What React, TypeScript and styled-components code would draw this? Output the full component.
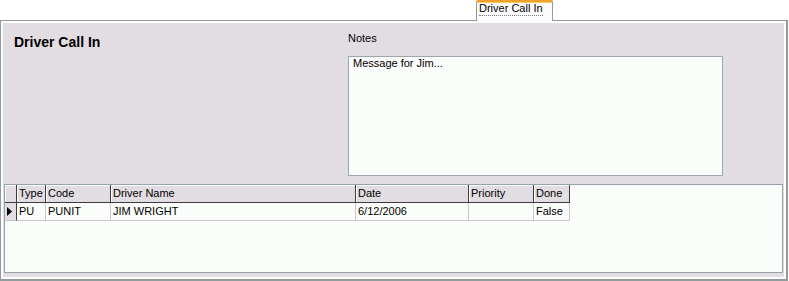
import React from 'react';
import styled, { createGlobalStyle } from 'styled-components';

const GlobalStyle = createGlobalStyle`
    html, body {
        margin: 0;
        padding: 0;
        background: #ffffff;
    }
    body {
        font-family: "Liberation Sans", Arial, sans-serif;
        font-size: 11px;
        color: #000000;
    }
`

const Page = styled.div`
    display: flex;
    flex-direction: column;
    width: 789px;
    height: 281px;
    box-sizing: border-box;
`
const TabStrip = styled.div`
    display: flex;
    flex-direction: row;
    height: 20px;
    padding-left: 476px;
`
const Tab = styled.div`
    position: relative;
    z-index: 1;
    box-sizing: border-box;
    width: 77px;
    height: 21px;
    margin-bottom: -1px;
    padding-left: 2px;
    background: #fcfcfe;
    border-left: 1px solid #919b9c;
    border-right: 1px solid #919b9c;
    border-top: 2px solid #f0a02c;
    border-radius: 2px 2px 0 0;
    box-shadow: inset 0 1px 0 #ffc85a;
`
const TabLabel = styled.span`
    display: inline-block;
    line-height: 13px;
    border-bottom: 1px dotted #7a7a7a;
`
const Panel = styled.div`
    box-sizing: border-box;
    width: 788px;
    height: 261px;
    border-left: 1px solid #919b9c;
    border-top: 1px solid #919b9c;
    border-right: 2px solid #919b9c;
    border-bottom: 2px solid #919b9c;
`
const PanelBody = styled.div`
    display: flex;
    flex-direction: column;
    box-sizing: border-box;
    height: 100%;
    border: 2px solid #fcfcfe;
    background: #e2dde2;
    padding-bottom: 4px;
`
const TopSection = styled.div`
    display: flex;
    flex-direction: row;
    height: 161px;
    flex-shrink: 0;
`
const TitleArea = styled.div`
    flex: 0 0 345px;
    box-sizing: border-box;
    padding: 11px 0 0 11px;
`
const Title = styled.div`
    font-size: 14px;
    line-height: 16px;
    font-weight: 700;
`
const NotesArea = styled.div`
    display: flex;
    flex-direction: column;
    padding-top: 9px;
`
const Label = styled.div`
    line-height: 13px;
    margin-bottom: 11px;
`
const NotesBox = styled.div`
    box-sizing: border-box;
    width: 375px;
    height: 120px;
    padding: 0 4px;
    line-height: 13px;
    background: #fbfdfb;
    border: 1px solid #9ea6ae;
`
const GridBox = styled.div`
    box-sizing: border-box;
    height: 89px;
    margin: 0 1px;
    background: #fbfdfb;
    border: 1px solid #98a2aa;
`
const GridRow = styled.div`
    display: grid;
    grid-template-columns: 12px 29px 65px 245px 113px 65px 36px;
    height: 18px;
`
const HeaderCell = styled.div`
    box-sizing: border-box;
    padding-left: 2px;
    line-height: 17px;
    background: #e2dde2;
    border-right: 1px solid #3c3c3c;
    border-bottom: 1px solid #3c3c3c;
    box-shadow: inset 1px 1px 0 #fdfdfd;
    white-space: nowrap;
    overflow: hidden;
`
const RowHeader = styled.div`
    display: flex;
    align-items: center;
    padding-left: 2px;
    box-sizing: border-box;
    background: #e2dde2;
    border-right: 1px solid #3c3c3c;
    border-bottom: 1px solid #c4c4c4;
`
const Cell = styled.div`
    box-sizing: border-box;
    padding-left: 2px;
    line-height: 17px;
    border-right: 1px solid #c8c8c8;
    border-bottom: 1px solid #c8c8c8;
    white-space: nowrap;
    overflow: hidden;
`

type CallIn = {
    type: string,
    code: string,
    driverName: string,
    date: string,
    priority: string,
    done: string,
}

const columns = ['Type', 'Code', 'Driver Name', 'Date', 'Priority', 'Done'];

const calls: CallIn[] = [
    { type: 'PU', code: 'PUNIT', driverName: 'JIM WRIGHT', date: '6/12/2006', priority: '', done: 'False' },
];

const App = () => {
    return (
        <Page>
            <GlobalStyle />
            <TabStrip>
                <Tab>
                    <TabLabel>Driver Call In</TabLabel>
                </Tab>
            </TabStrip>
            <Panel>
                <PanelBody>
                    <TopSection>
                        <TitleArea>
                            <Title>Driver Call In</Title>
                        </TitleArea>
                        <NotesArea>
                            <Label>Notes</Label>
                            <NotesBox>Message for Jim...</NotesBox>
                        </NotesArea>
                    </TopSection>
                    <GridBox>
                        <GridRow>
                            <HeaderCell />
                            {columns.map(c => <HeaderCell key={c}>{c}</HeaderCell>)}
                        </GridRow>
                        {calls.map((row, i) => (
                            <GridRow key={i}>
                                <RowHeader>
                                    <svg width="6" height="9" viewBox="0 0 6 9">
                                        <polygon points="0,0 5,4.5 0,9" fill="#000" />
                                    </svg>
                                </RowHeader>
                                <Cell>{row.type}</Cell>
                                <Cell>{row.code}</Cell>
                                <Cell>{row.driverName}</Cell>
                                <Cell>{row.date}</Cell>
                                <Cell>{row.priority}</Cell>
                                <Cell>{row.done}</Cell>
                            </GridRow>
                        ))}
                    </GridBox>
                </PanelBody>
            </Panel>
        </Page>
    )
}

export default App
